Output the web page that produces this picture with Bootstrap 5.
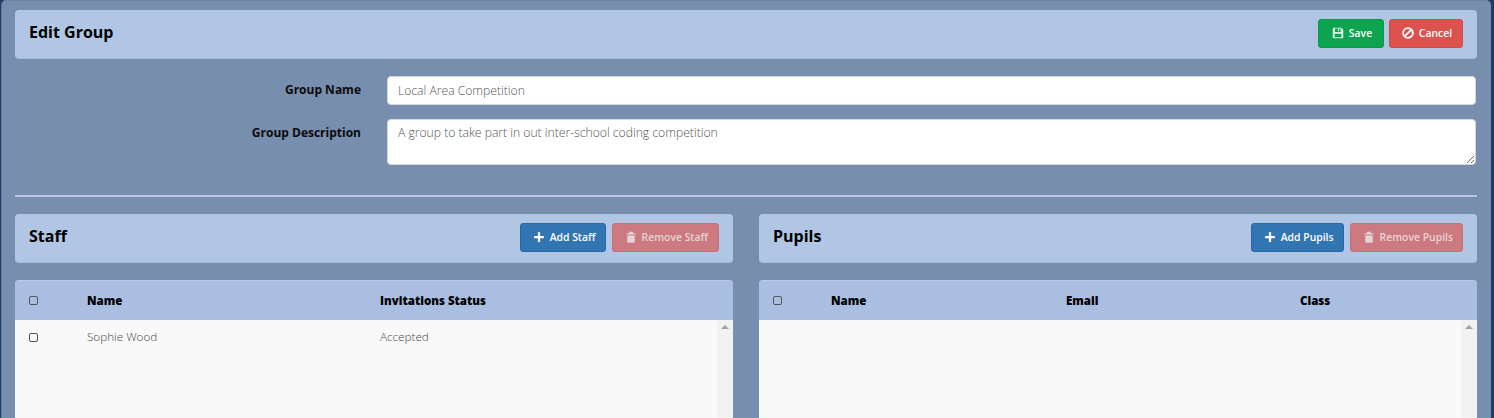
<!DOCTYPE html>
<html lang="en">
<head>
<meta charset="utf-8">
<title>Edit Group</title>
<link rel="stylesheet" href="https://cdn.jsdelivr.net/npm/bootstrap@5.3.0/dist/css/bootstrap.min.css">
<style>
html,body{height:418px;overflow:hidden}
body{background:#1f3b66;font-family:"Open Sans",sans-serif;font-size:12px;color:#000}
.shell{background:#788eae;height:418px;margin:0 3px 0 1px;padding:9px 14px 0 13px;border-radius:5px 5px 0 0;border-top:1px solid #6d83a4;border-left:1px solid #5f7ba3;overflow:hidden}
.headbar{background:#b1c6e5;border-radius:4px;height:48px;padding:0 14px 2px;box-shadow:0 1px 0 #a5bbdb}
.headbar h2{font-size:16px;font-weight:700;margin:0;color:#000}
.acts-top{gap:5px}
.acts-side{gap:6px}
.act{font-size:10.4px;font-weight:600;height:29px;padding:0 9px 0 12px;border-radius:3px;color:#fff;display:inline-flex;align-items:center;gap:5px;border:1px solid transparent;line-height:1}
.act svg{width:12px;height:12px;flex:none}
.act-save{background:#0ca44e;border-color:#0b9a49;width:66px;padding:0 0 0 2px;justify-content:center}
.act-save svg{color:#dcf2e3}
.act-cancel{background:#dd524d;border-color:#d04a46;width:74px;padding:0 0 0 2px;justify-content:center}
.act-add{background:#3175b3;border-color:#2a69a3}
.act-remove{background:#cc7a80;border-color:#c96f76;color:#e6d3d8}
.act-wide{padding-right:10px}
.formrow{display:flex;align-items:flex-start}
.row-a{margin-top:18px}
.row-b{margin-top:14px}
.lbl{width:346px;flex:none;text-align:right;font-weight:700;font-size:12px;color:#0b0b0b;line-height:16px;padding-top:6px;margin-right:26px}
.fieldbox{flex:1;background:#fff;border:1px solid #d4d7dc;border-radius:4px;font-size:12.15px;font-weight:300;color:#555;padding:5px 10px;margin-right:1px;outline:0}
.one{height:29px;line-height:17px}
.two{height:46px;line-height:17px;padding-top:4px;resize:vertical;display:block}
.rule{height:2px;background:#b5c6dd;margin:30px 0 17px;border:0;opacity:1}
.cols{display:flex;gap:26px}
.side{flex:1 1 0;min-width:0}
.gridhead{background:#a9bee0;border-radius:4px 4px 0 0;height:40px;padding-top:1px;margin-top:18px;display:flex;align-items:center;font-weight:800;font-size:11.5px;color:#000;box-shadow:0 1px 0 #b8cae6 inset}
.gridbody{background:#f9f9f9;height:120px;display:flex;justify-content:space-between}
.gridrow{display:flex;height:34px;align-items:center;flex:1;font-size:11.7px;font-weight:300;color:#444}
.tick{width:9px;height:9px;border:1px solid #555;border-radius:2px;margin-left:14px;flex:none;background:transparent}
.cname{margin-left:49px}
.w-staff{width:293px}
.w-pname{width:235px}
.w-email{width:234px}
.scroller{width:16px;background:#f1f1f1;position:relative;flex:none}
.scroller::before{content:"";position:absolute;left:4px;top:5px;border:4px solid transparent;border-top:0;border-bottom:4px solid #a3a3a3}
</style>
</head>
<body>
<div class="shell">
  <div class="headbar d-flex align-items-center justify-content-between">
    <h2>Edit Group</h2>
    <div class="d-flex acts-top">
      <button class="act act-save" type="button"><svg viewBox="0 0 16 16"><path fill="currentColor" fill-rule="evenodd" d="M2 1h10.500L15 3.500V14a1 1 0 0 1-1 1H2a1 1 0 0 1-1-1V2a1 1 0 0 1 1-1zm2 1v4.500h7.500V2H9.500v3.500H8V2H4zM3.500 9v4.500h9V9h-9z"/></svg>Save</button>
      <button class="act act-cancel" type="button"><svg viewBox="0 0 16 16"><circle cx="8" cy="8" r="6.500" fill="none" stroke="currentColor" stroke-width="2.400"/><path d="M3.400 12.600 12.600 3.400" stroke="currentColor" stroke-width="2.400"/></svg>Cancel</button>
    </div>
  </div>
  <div class="formrow row-a">
    <div class="lbl">Group Name</div>
    <input class="fieldbox one" type="text" value="Local Area Competition">
  </div>
  <div class="formrow row-b">
    <div class="lbl">Group Description</div>
    <textarea class="fieldbox two">A group to take part in out inter-school coding competition</textarea>
  </div>
  <hr class="rule">
  <div class="cols">
    <div class="side">
      <div class="headbar d-flex align-items-center justify-content-between">
        <h2>Staff</h2>
        <div class="d-flex acts-side">
          <button class="act act-add" type="button"><svg viewBox="0 0 16 16"><path fill="currentColor" d="M6.500 1.500h3v5h5v3h-5v5h-3v-5h-5v-3h5z"/></svg>Add Staff</button>
          <button class="act act-remove act-wide" type="button"><svg viewBox="0 0 16 16"><path fill="currentColor" d="M6 1h4l1 2h3v1.500H2V3h3zM3 6h10v8.500a1 1 0 0 1-1 1H4a1 1 0 0 1-1-1z"/></svg>Remove Staff</button>
        </div>
      </div>
      <div class="gridhead">
        <span class="tick"></span>
        <span class="cname w-staff">Name</span>
        <span>Invitations Status</span>
      </div>
      <div class="gridbody">
        <div class="gridrow">
          <span class="tick"></span>
          <span class="cname w-staff">Sophie Wood</span>
          <span>Accepted</span>
        </div>
        <div class="scroller"></div>
      </div>
    </div>
    <div class="side">
      <div class="headbar d-flex align-items-center justify-content-between">
        <h2>Pupils</h2>
        <div class="d-flex acts-side">
          <button class="act act-add" type="button"><svg viewBox="0 0 16 16"><path fill="currentColor" d="M6.500 1.500h3v5h5v3h-5v5h-3v-5h-5v-3h5z"/></svg>Add Pupils</button>
          <button class="act act-remove" type="button"><svg viewBox="0 0 16 16"><path fill="currentColor" d="M6 1h4l1 2h3v1.500H2V3h3zM3 6h10v8.500a1 1 0 0 1-1 1H4a1 1 0 0 1-1-1z"/></svg>Remove Pupils</button>
        </div>
      </div>
      <div class="gridhead">
        <span class="tick"></span>
        <span class="cname w-pname">Name</span>
        <span class="w-email">Email</span>
        <span>Class</span>
      </div>
      <div class="gridbody">
        <div class="gridrow"></div>
        <div class="scroller"></div>
      </div>
    </div>
  </div>
</div>
<script src="https://cdn.jsdelivr.net/npm/bootstrap@5.3.0/dist/js/bootstrap.bundle.min.js"></script>
</body>
</html>
